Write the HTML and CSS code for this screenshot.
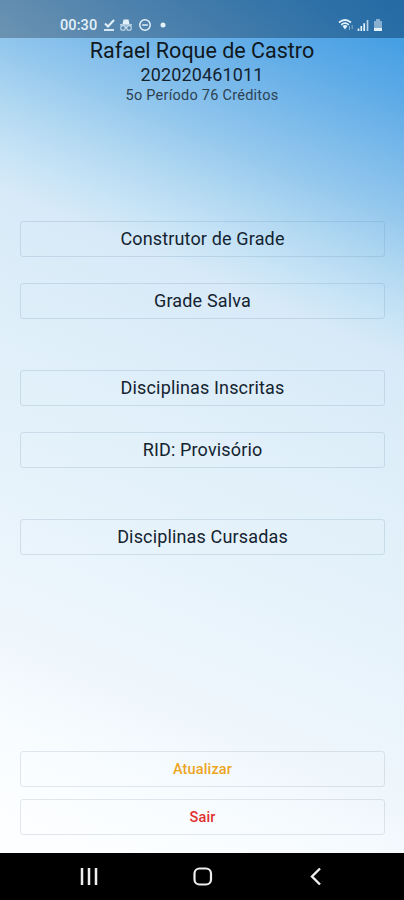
FILE: index.html
```
<!DOCTYPE html>
<html lang="pt-BR">
<head>
    <meta charset="UTF-8">
    <meta name="viewport" content="width=device-width, initial-scale=1.0">
    <title>Grade</title>
    <link rel="stylesheet" href="styles.css">
</head>
<body>
    <div class="screen">
        <div class="status-bar">
            <span class="time">00:30</span>
            <svg class="status-left" width="66" height="14" viewBox="0 0 66 14" fill="none" stroke="currentColor">
                <path d="M2 5.5l3 3L11 2" stroke-width="2"/>
                <path d="M1 12h10" stroke-width="1.8"/>
                <path d="M19.5 6l1-4.5h5l1 4.5z" fill="currentColor" stroke="none"/>
                <path d="M17 6.9h12" stroke-width="1.2"/>
                <circle cx="20" cy="10" r="2.3" stroke-width="1.1" opacity=".8"/>
                <circle cx="26" cy="10" r="2.3" stroke-width="1.1" opacity=".8"/>
                <path d="M22 9.5q1-.8 2 0"/>
                <circle cx="42" cy="7" r="5.2" stroke-width="1.5"/>
                <path d="M39.2 7h5.6" stroke-width="1.5"/>
                <circle cx="60" cy="7" r="2.5" fill="currentColor" stroke="none"/>
            </svg>
            <svg class="status-right" width="46" height="14" viewBox="0 0 46 14" fill="none" stroke="currentColor">
                <path d="M1 4.5q6-5 12 0M3.2 6.8q3.8-3.3 7.6 0" stroke-width="1.7"/>
                <path d="M4.5 8q2.5-2 5 0L7 11.5z" fill="currentColor" stroke="none"/>
                <path d="M11.5 8v4M14.2 7v4" opacity=".5"/>
                <path d="M20.5 10.5V13M23.3 8v5M26.2 5.2V13" stroke-width="1.7"/>
                <path d="M29.5 2v11" stroke-width="1.7" opacity=".75"/>
                <path d="M36 3h2V1h4v2h2v8h-8z" fill="currentColor" stroke="none" opacity=".5"/>
                <path d="M36 10h8v3h-8z" fill="currentColor" stroke="none"/>
            </svg>
        </div>

        <div class="student">
            <div class="name">Rafael Roque de Castro</div>
            <div class="number">202020461011</div>
            <div class="period">5o Período 76 Créditos</div>
        </div>

        <div class="menu">
            <div class="group">
                <button>Construtor de Grade</button>
                <button>Grade Salva</button>
            </div>
            <div class="group">
                <button>Disciplinas Inscritas</button>
                <button>RID: Provisório</button>
            </div>
            <div class="group">
                <button>Disciplinas Cursadas</button>
            </div>
        </div>

        <div class="actions">
            <button class="update">Atualizar</button>
            <button class="logout">Sair</button>
        </div>
    </div>

    <div class="nav-bar">
        <svg width="18" height="20" viewBox="0 0 18 20" fill="none" stroke="currentColor" stroke-width="2.5">
            <path d="M2 1v17M9 1v17M16 1v17"/>
        </svg>
        <svg width="20" height="20" viewBox="0 0 20 20" fill="none" stroke="currentColor" stroke-width="2.2">
            <rect x="1.5" y="1.5" width="16.5" height="16" rx="5"/>
        </svg>
        <svg width="18" height="20" viewBox="0 0 18 20" fill="none" stroke="currentColor" stroke-width="2.4">
            <path d="M13 1.5L5 9.5l8 8"/>
        </svg>
    </div>
</body>
</html>
```
FILE: styles.css
```
body {
    margin: 0;
    height: 900px;
    display: flex;
    flex-direction: column;
    font-family: Roboto, sans-serif;
    color: #142330;
    background-color: #000;
}
.screen {
    height: 853px;
    display: flex;
    flex-direction: column;
    background: linear-gradient(203deg, #3c98df 0%, #459fe3 4%, #5eabe7 10%, #93c7ed 21%, #b3d9f2 27%, #c8e4f6 31.5%, #d8eaf8 35.5%, #deeef9 46%, #e3f1fa 56%, #e9f4fc 68%, #eef6fc 77%, #fafdff 90%, #fdfeff 100%);
}
.status-bar {
    box-sizing: border-box;
    height: 38px;
    padding: 12px 20px 0 60px;
    display: flex;
    align-items: center;
    color: #e3f1fa;
    background: linear-gradient(90deg, rgba(65,85,105,0.45), rgba(12,60,105,0.5));
}
.time {
    font-size: 14.5px;
    font-weight: 500;
    letter-spacing: 0.1px;
}
.status-left {
    margin-left: 6px;
}
.status-right {
    margin-left: auto;
}
.student {
    text-align: center;
}
.name {
    font-size: 21.5px;
    line-height: 26px;
    color: #101820;
}
.number {
    font-size: 18px;
    line-height: 22px;
    letter-spacing: 0.15px;
}
.period {
    font-size: 14.5px;
    line-height: 19px;
    letter-spacing: 0.25px;
    color: #2c4252;
}
.menu {
    margin: 116px 19px 0 20px;
    display: flex;
    flex-direction: column;
    gap: 51px;
}
.group {
    display: flex;
    flex-direction: column;
    gap: 26px;
}
button {
    height: 36px;
    padding: 0 0 2px;
    font-family: inherit;
    font-size: 18px;
    letter-spacing: 0.15px;
    color: #142330;
    border: 1px solid rgba(100,135,165,0.2);
    border-radius: 3px;
    background-color: transparent;
    cursor: pointer;
}
.actions {
    margin: auto 19px 18px 20px;
    display: flex;
    flex-direction: column;
    gap: 12px;
}
.actions button {
    padding: 0;
    font-size: 14.5px;
    font-weight: 500;
    border-color: rgba(130,150,175,0.22);
}
.actions .update {
    color: #eda51f;
}
.actions .logout {
    color: #e0302e;
}
.nav-bar {
    height: 47px;
    padding: 0 79px 0 80px;
    display: flex;
    align-items: center;
    justify-content: space-between;
    color: #eee;
    background-color: #000;
}
```
